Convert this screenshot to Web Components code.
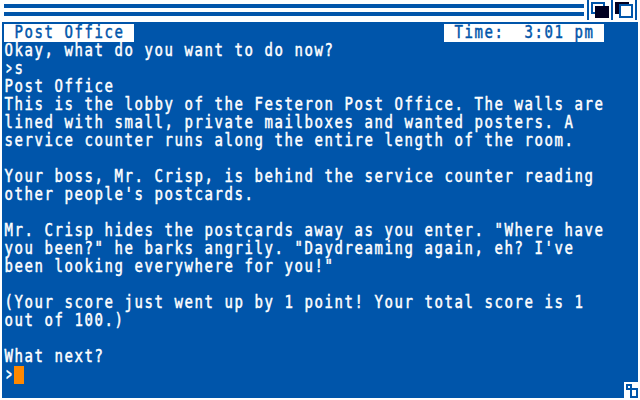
<!DOCTYPE html>
<html lang="en"><head><meta charset="utf-8"><title>Post Office</title>
<style>html,body{margin:0;background:#fff}</style></head><body>
<game-window></game-window>
<script>
const define=(name,html)=>customElements.define(name,class extends HTMLElement{
 constructor(){super();this.attachShadow({mode:'open'}).innerHTML=html;}
});
// Tall, narrow terminal lettering on a 10 by 18 pixel cell.
const cell=`.cell{display:block;width:max-content;height:15px;font:14px/15px "DejaVu Sans Mono",monospace;letter-spacing:1.572px;
-webkit-text-stroke:.4px currentColor;white-space:pre;transform-origin:0 0;transform:translate(.4px,-.4px) scaleY(1.2)}`;
define('depth-gadgets',`<style>:host{display:block;width:53px;height:22px}svg{display:block}</style>
<svg width="53" height="22" shape-rendering="crispEdges">
<path fill="#0055aa" d="M0 0h2v20h-2zM24 0h2v20h-2zM48 0h2v20h-2z"/>
<rect x="5" y="3" width="12" height="10" fill="#fff" stroke="#0055aa" stroke-width="2"/>
<rect x="8" y="6" width="14" height="12" fill="#000022"/>
<rect x="28" y="2" width="14" height="12" fill="#000022"/>
<rect x="33" y="5" width="12" height="12" fill="#fff" stroke="#0055aa" stroke-width="2"/>
</svg>`);
define('title-bar',`<style>:host{display:flex;height:22px;padding-left:4px;background:#fff}
.stripes{width:580px;margin-right:3px;display:flex;flex-direction:column;gap:4px;padding-top:4px}
.stripes i{height:4px;background:#0055aa}</style><div class="stripes"><i></i><i></i></div><depth-gadgets></depth-gadgets>`);
define('status-label',`<style>${cell}:host{display:block;height:18px;background:#fff;color:#0055aa}</style><span class="cell"><slot></slot></span>`);
define('status-line',`<style>:host{display:flex;justify-content:space-between;width:600px;height:18px}</style><slot></slot>`);
define('text-line',`<style>${cell}:host{display:flex;height:18px}</style><span class="cell"><slot></slot></span><slot name="cursor"></slot>`);
define('text-prompt',`<style>:host{display:inline-block;transform:scaleX(.65)}</style><slot></slot>`);
define('text-cursor',`<style>:host{display:block;width:10px;height:18px;background:#ff8800}</style>`);
define('size-gadget',`<style>:host{display:block;position:absolute;right:0;bottom:0;width:14px;height:16px;background:#fff}svg{display:block}</style>
<svg width="14" height="16" fill="none" stroke="#0055aa" stroke-width="2" shape-rendering="crispEdges"><rect x="3" y="3" width="4" height="4"/><rect x="7" y="7" width="6" height="8"/></svg>`);
const lines=['Okay, what do you want to do now?','>s','Post Office','This is the lobby of the Festeron Post Office. The walls are','lined with small, private mailboxes and wanted posters. A','service counter runs along the entire length of the room.','','Your boss, Mr. Crisp, is behind the service counter reading',"other people's postcards.",'','Mr. Crisp hides the postcards away as you enter. "Where have','you been?" he barks angrily. "Daydreaming again, eh? I\'ve','been looking everywhere for you!"','','(Your score just went up by 1 point! Your total score is 1','out of 100.)','','What next?'];
define('game-window',`<style>:host{display:block;width:640px;height:400px;background:#fff;overflow:hidden}
main{position:relative;box-sizing:border-box;margin-left:2px;width:636px;height:376px;padding:2px;background:#0055aa;color:#fff}
</style>
<title-bar></title-bar><main><status-line><status-label> Post Office </status-label><status-label> Time:  3:01 pm </status-label></status-line>
${lines.map(l=>`<text-line>${l.replace('>','<text-prompt>&gt;</text-prompt>')}</text-line>`).join('')}<text-line><text-prompt>&gt;</text-prompt><text-cursor slot="cursor"></text-cursor></text-line><size-gadget></size-gadget></main>`);
</script></body></html>
